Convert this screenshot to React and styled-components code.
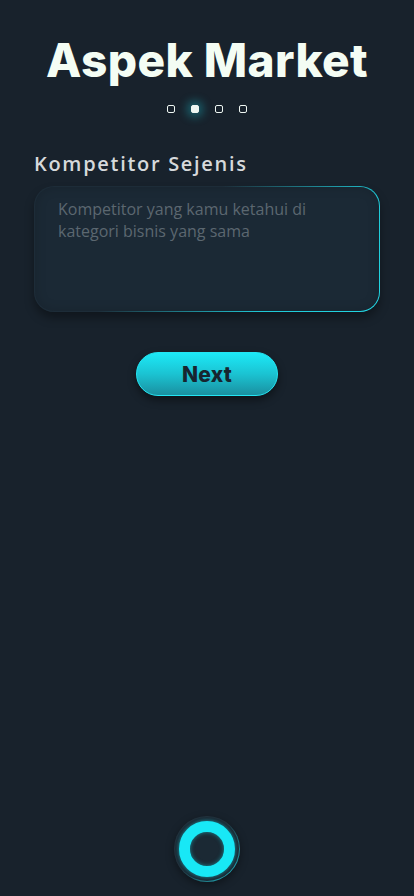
import React, { useState } from "react";
import styled, { createGlobalStyle } from "styled-components";

const GlobalStyle = createGlobalStyle`
  html, body {
    margin: 0;
    padding: 0;
    background: #18222c;
  }
  * {
    box-sizing: border-box;
  }
`;

const Screen = styled.div`
  width: 414px;
  height: 896px;
  background: #18222c;
  display: flex;
  flex-direction: column;
  align-items: center;
  font-family: "Open Sans", "Liberation Sans", sans-serif;
  overflow: hidden;
`;

const Title = styled.h1`
  margin: 30px 0 0;
  font-family: "Inter", "Lato", sans-serif;
  font-weight: 800;
  font-size: 46px;
  line-height: 60px;
  letter-spacing: 0.4px;
  color: #f4fdf4;
`;

const Dots = styled.div`
  display: flex;
  gap: 16px;
  margin-top: 15px;
`;

const Dot = styled.span`
  width: 8px;
  height: 8px;
  border-radius: 2px;
  border: 1.5px solid #eef6f2;
  background: ${(p) => (p.active ? "#eef6f2" : "transparent")};
  box-shadow: ${(p) =>
    p.active ? "0 0 8px 4px rgba(30, 200, 215, 0.35)" : "none"};
`;

const Form = styled.div`
  align-self: stretch;
  padding: 0 34px;
  margin-top: 38px;
  display: flex;
  flex-direction: column;
`;

const Label = styled.label`
  font-family: "Open Sans", sans-serif;
  font-weight: 600;
  font-size: 20px;
  line-height: 26px;
  letter-spacing: 1.7px;
  color: #d6d9db;
  margin-bottom: 9px;
`;

const TextArea = styled.textarea`
  width: 100%;
  height: 126px;
  resize: none;
  border-radius: 20px;
  border: 1px solid transparent;
  background:
    linear-gradient(#1b2935, #1b2935) padding-box,
    linear-gradient(135deg, #1d2c38 0%, #1d2c38 40%, #1fc8d6 75%, #22d7e4 100%) border-box;
  box-shadow: 0 6px 10px rgba(0, 0, 0, 0.35), inset 0 0 12px rgba(0, 0, 0, 0.15);
  padding: 11px 44px 12px 23px;
  font-family: "Open Sans", sans-serif;
  font-size: 16px;
  line-height: 22px;
  color: #c8ced2;
  outline: none;

  &::placeholder {
    color: #5b6770;
  }
`;

const NextButton = styled.button`
  margin-top: 40px;
  width: 142px;
  height: 44px;
  border-radius: 22px;
  border: 1px solid #23e6f3;
  background: linear-gradient(180deg, #1ce9f7 0%, #1bc3d2 50%, #1a90a0 100%);
  box-shadow: 0 4px 8px rgba(0, 0, 0, 0.45);
  font-family: "Inter", "Lato", sans-serif;
  font-weight: 800;
  font-size: 21px;
  letter-spacing: 0.3px;
  color: #17252f;
  cursor: pointer;
`;

const Spacer = styled.div`
  flex: 1;
`;

const Home = styled.div`
  width: 66px;
  height: 66px;
  border-radius: 50%;
  margin-bottom: 14px;
  display: flex;
  align-items: center;
  justify-content: center;
  border: 1px solid transparent;
  background:
    linear-gradient(#1b2833, #1b2833) padding-box,
    linear-gradient(135deg, #22303b 0%, #22303b 45%, #1fc6d4 100%) border-box;
  box-shadow: 0 3px 8px rgba(0, 0, 0, 0.4);
`;

const Ring = styled.div`
  width: 56px;
  height: 56px;
  border-radius: 50%;
  border: 11px solid #18e8f6;
  box-shadow: 0 0 4px rgba(24, 232, 246, 0.6), inset 0 0 4px rgba(24, 232, 246, 0.5);
  background: #1b2934;
`;

export default function App() {
  const [value, setValue] = useState("");
  return (
    <>
      <GlobalStyle />
      <Screen>
        <Title>Aspek Market</Title>
        <Dots>
          <Dot />
          <Dot active />
          <Dot />
          <Dot />
        </Dots>
        <Form>
          <Label>Kompetitor Sejenis</Label>
          <TextArea
            placeholder="Kompetitor yang kamu ketahui di kategori bisnis yang sama"
            value={value}
            onChange={(e) => setValue(e.target.value)}
          />
        </Form>
        <NextButton>Next</NextButton>
        <Spacer />
        <Home>
          <Ring />
        </Home>
      </Screen>
    </>
  );
}
